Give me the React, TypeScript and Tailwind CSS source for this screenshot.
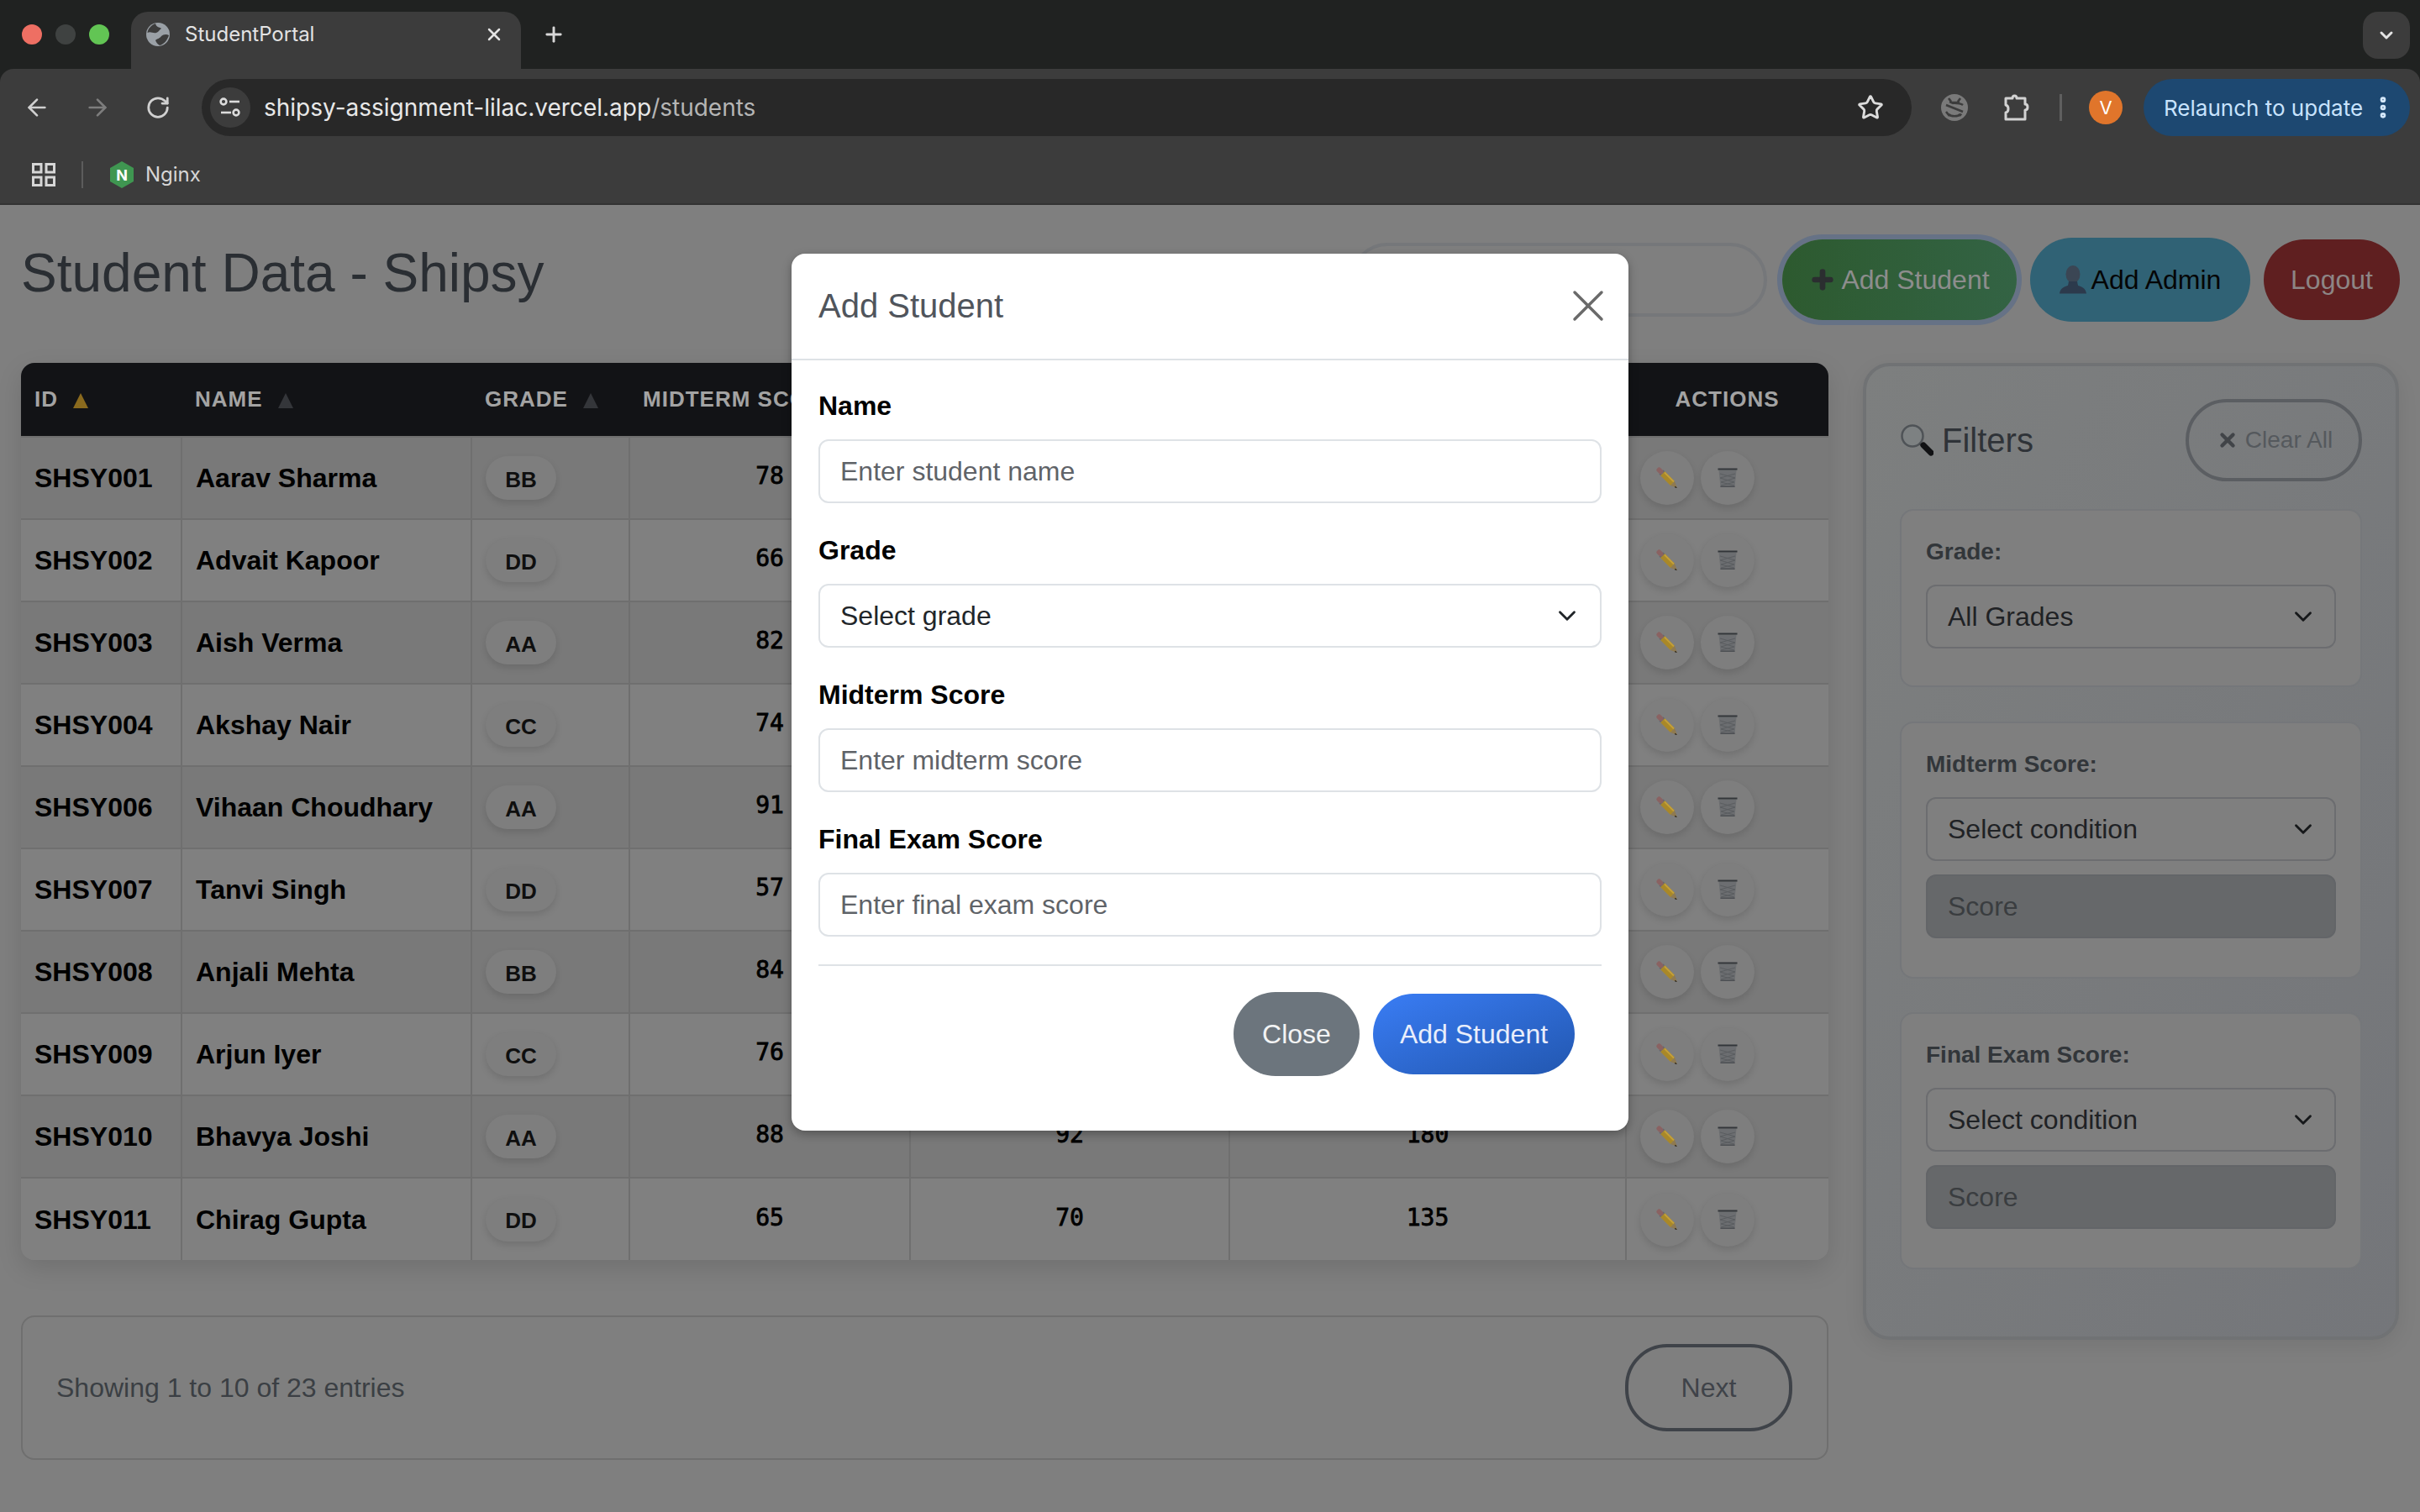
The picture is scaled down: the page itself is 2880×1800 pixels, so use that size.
import React from "react";
import { ArrowLeft, ArrowRight, ChevronDown, MoreVertical, Plus, RotateCw, Star, X } from "lucide-react";

const students = [
  ["SHSY001", "Aarav Sharma", "BB", "78", "85", "163"],
  ["SHSY002", "Advait Kapoor", "DD", "66", "71", "137"],
  ["SHSY003", "Aish Verma", "AA", "82", "90", "172"],
  ["SHSY004", "Akshay Nair", "CC", "74", "79", "153"],
  ["SHSY006", "Vihaan Choudhary", "AA", "91", "95", "186"],
  ["SHSY007", "Tanvi Singh", "DD", "57", "62", "119"],
  ["SHSY008", "Anjali Mehta", "BB", "84", "80", "164"],
  ["SHSY009", "Arjun Iyer", "CC", "76", "72", "148"],
  ["SHSY010", "Bhavya Joshi", "AA", "88", "92", "180"],
  ["SHSY011", "Chirag Gupta", "DD", "65", "70", "135"],
];

const SortArrow = ({ color = "#34363a" }: { color?: string }) => (
  <svg width="18" height="18" viewBox="0 0 18 18" className="ml-[18px] inline-block align-[-2px]">
    <polygon points="9,0 18,18 0,18" fill={color} />
  </svg>
);

const Pencil = () => (
  <svg width="26" height="26" viewBox="0 0 26 26">
    <path d="M7.5 7.5 L19.5 19.5" stroke="#a98828" strokeWidth="7" />
    <path d="M10 6.5 L21 17.5" stroke="#c4a03a" strokeWidth="1.8" />
    <path d="M6 6 L7.5 7.5" stroke="#5d6670" strokeWidth="7" />
    <path d="M3.5 3.5 L5.5 5.5" stroke="#8a6262" strokeWidth="6" strokeLinecap="round" />
    <path d="M17 22 L22 17 L25 25 Z" fill="#8f7a50" />
    <path d="M22.8 22.8 L25 25 L22 24.2 Z" fill="#111" />
  </svg>
);

const Trash = () => (
  <svg width="24" height="24" viewBox="0 0 24 24">
    <path d="M1.5 2.5 H22.5 L20.5 23 H3.5 Z" fill="#6c6e71" />
    <path d="M3 7 L21 12 M3 12 L20 17 M21 7 L3 12 M21 12 L4 17 M4 17 L20 21 M20 17 L4 21" stroke="#5a5d60" strokeWidth="1" />
    <rect x="0.5" y="0.5" width="23" height="2" fill="#33363a" />
    <rect x="3.5" y="21.5" width="17" height="1.5" fill="#4c4f53" />
  </svg>
);

const Magnifier = () => (
  <svg width="40" height="40" viewBox="0 0 40 40">
    <circle cx="15" cy="15" r="12.5" fill="#7d8182" stroke="#4f5357" strokeWidth="2.5" />
    <path d="M24 24 L27 27" stroke="#45484c" strokeWidth="3" />
    <path d="M28 26 L37 35" stroke="#111214" strokeWidth="7" strokeLinecap="round" />
  </svg>
);

const Bust = () => (
  <svg width="32" height="34" viewBox="0 0 32 34">
    <ellipse cx="16" cy="10.5" rx="8.5" ry="10.5" fill="#3b4654" />
    <path d="M11 19 H21 L22 24 C27 25.5 31 27 32 33.5 H0 C1 27 5 25.5 10 24 Z" fill="#2c3a4c" />
  </svg>
);

const GlobeFavicon = () => (
  <svg width="28" height="28" viewBox="0 0 28 28">
    <circle cx="14" cy="14" r="14" fill="#9aa0a6" />
    <path d="M11 1 C6 3 2 7 1.5 12 C5 10 8 13 12 12 C15 11 16 8 18 7 C16 5 12 6 11 1 Z" fill="#3c3c3c" />
    <path d="M27 15 C24 13 20 14 18 16 C16 19 13 19 11 21 C12 24 14 26 16 27 C21 26 25 21 27 15 Z" fill="#3c3c3c" />
  </svg>
);

const TuneIcon = () => (
  <svg width="26" height="24" viewBox="0 0 26 24" fill="none" stroke="#dcdcdc" strokeWidth="2.6">
    <circle cx="5" cy="5" r="3.4" />
    <path d="M12 5 H24" />
    <path d="M2 18 H14" />
    <circle cx="20" cy="18" r="3.4" />
  </svg>
);

const BugIcon = () => (
  <svg width="32" height="32" viewBox="0 0 32 32">
    <circle cx="16" cy="16" r="16" fill="#7a7a7a" />
    <path d="M9 5 L12 9 M23 5 L20 9 M10 10 H22 M6 13 C10 10 22 10 26 13 M6 21 L10 26 M26 21 L22 26 M9 24 C12 27 20 27 23 24" stroke="#3c3c3c" strokeWidth="2.6" fill="none" />
    <path d="M4 11 L28 22" stroke="#7a7a7a" strokeWidth="6" />
    <path d="M6 13 L26 21" stroke="#3c3c3c" strokeWidth="2.6" />
  </svg>
);

const PuzzleIcon = () => (
  <svg width="32" height="34" viewBox="0 0 32 34" fill="none" stroke="#d2d2d2" strokeWidth="3" strokeLinejoin="round">
    <path d="M3 6 H11 C11 2 16 2 16 6 H26 V13 C30 13 30 20 26 20 V31 H3 V23 C7 22 7 15 3 14 Z" />
  </svg>
);

const AppsIcon = () => (
  <svg width="28" height="28" viewBox="0 0 28 28" fill="none" stroke="#d6d6d6" strokeWidth="3">
    <rect x="1.5" y="1.5" width="9.5" height="9.5" />
    <rect x="17" y="1.5" width="9.5" height="9.5" />
    <rect x="1.5" y="17" width="9.5" height="9.5" />
    <rect x="17" y="17" width="9.5" height="9.5" />
  </svg>
);

const NginxIcon = () => (
  <span className="relative flex h-[32px] w-[28px] items-center justify-center">
    <svg width="28" height="32" viewBox="0 0 28 32" className="absolute inset-0">
      <polygon points="14,0 28,8 28,24 14,32 0,24 0,8" fill="#3f9651" />
    </svg>
    <span className="relative text-[18px] font-bold text-white">N</span>
  </span>
);

const BrowserChrome = () => (
  <div className="bg-[#202221] font-['Inter',sans-serif]">
    <div className="flex h-[82px] items-end pl-[26px] pr-[12px]">
      <div className="flex h-[82px] items-center gap-[16px] pr-[26px]">
        <span className="h-[24px] w-[24px] rounded-full bg-[#ee6f63]" />
        <span className="h-[24px] w-[24px] rounded-full bg-[#3f4241]" />
        <span className="h-[24px] w-[24px] rounded-full bg-[#62c554]" />
      </div>
      <div className="flex h-[68px] w-[464px] items-center rounded-t-[20px] bg-[#3c3c3c] pb-[14px] pl-[18px] pr-[20px] text-[#e3e3e3]">
        <GlobeFavicon />
        <span className="ml-[18px] flex-1 text-[24px]">StudentPortal</span>
        <X size={24} strokeWidth={2.5} />
      </div>
      <div className="flex h-[82px] items-center pl-[25px] text-[#d8d8d8]">
        <Plus size={28} strokeWidth={2.5} className="-mt-[1px]" />
      </div>
      <div className="ml-auto flex h-[56px] w-[56px] items-center justify-center self-start mt-[14px] rounded-[18px] bg-[#3c3c3c] text-[#e3e3e3]">
        <ChevronDown size={24} strokeWidth={3} />
      </div>
    </div>
    <div className="flex h-[162px] flex-col rounded-t-[16px] border-b-2 border-[#333] bg-[#3c3c3c]">
      <div className="mt-[12px] flex h-[68px] items-center pl-[28px] pr-[12px]">
        <ArrowLeft size={32} strokeWidth={2} className="text-[#d0d0d0]" />
        <ArrowRight size={32} strokeWidth={2} className="ml-[40px] text-[#7d7d7d]" />
        <RotateCw size={30} strokeWidth={2.2} className="ml-[41px] text-[#d0d0d0]" />
        <div className="ml-[37px] flex h-[68px] w-[2035px] items-center rounded-full bg-[#282828] pl-[10px] pr-[33px]">
          <span className="flex h-[48px] w-[48px] items-center justify-center rounded-full bg-[#3c3c3c]">
            <TuneIcon />
          </span>
          <span className="ml-[16px] flex-1 text-[28px] text-[#e8e8e8]">
            shipsy-assignment-lilac.vercel.app<span className="text-[#b5b5b5]">/students</span>
          </span>
          <Star size={32} strokeWidth={2.2} className="text-[#dcdcdc]" />
        </div>
        <span className="ml-[35px]"><BugIcon /></span>
        <span className="ml-[42px]"><PuzzleIcon /></span>
        <span className="ml-[35px] h-[32px] w-[3px] bg-[#5f5f5f]" />
        <span className="ml-[32px] flex h-[40px] w-[40px] items-center justify-center rounded-full bg-[#e0752b] text-[22px] text-white">V</span>
        <div className="ml-[25px] flex h-[68px] w-[317px] items-center rounded-full bg-[#1d4871] pl-[24px] pr-[16px] text-[#c8e3fd]">
          <span className="flex-1 text-[26px]">Relaunch to update</span>
          <MoreVertical size={32} strokeWidth={3} className="text-[#d5e8fb]" />
        </div>
      </div>
      <div className="mt-[28px] flex items-center pl-[38px]">
        <AppsIcon />
        <span className="ml-[31px] h-[32px] w-[2px] bg-[#5c5c5c]" />
        <span className="ml-[32px]"><NginxIcon /></span>
        <span className="ml-[14px] text-[24px] text-[#d6d6d6]">Nginx</span>
      </div>
    </div>
  </div>
);

const FakeSelect = ({ label, text }: { label: string; text: string }) => (
  <div
    aria-label={label}
    className="flex h-[76px] items-center justify-between rounded-[12px] border-2 border-[#6c6d70] pl-[24px] pr-[20px] text-[32px] text-[#1f2225]"
  >
    {text}
    <ChevronDown size={34} strokeWidth={2} className="text-[#16181a]" />
  </div>
);

const FilterCard = ({ label, text, score, className }: { label: string; text: string; score?: boolean; className?: string }) => (
  <div className={`rounded-[16px] border-2 border-[#75777a] bg-[#7f7f7f] px-[29px] pt-[28px] ${score ? "pb-[46px]" : "pb-[44px]"} ${className ?? ""}`}>
    <div className="mb-[18px] h-[42px] text-[28px] font-bold leading-[42px] text-[#32363a]">{label}</div>
    <FakeSelect label={label} text={text} />
    {score && (
      <div className="mt-[16px] flex h-[76px] items-center rounded-[12px] border-2 border-[#636568] bg-[#66686a] pl-[24px] text-[32px] text-[#3a3d40]">
        Score
      </div>
    )}
  </div>
);

const FiltersPanel = () => (
  <aside className="ml-[41px] h-[1163px] w-[638px] rounded-[32px] border-4 border-[#707274] bg-gradient-to-br from-[#7d7f7f] to-[#74767a] pl-[40px] pr-[40px] pt-[39px] shadow-[0_8px_24px_rgba(0,0,0,0.08)]">
    <div className="mb-[33px] flex h-[98px] items-center justify-between">
      <div className="flex items-center gap-[10px] text-[40px] text-[#2f3338]">
        <Magnifier />
        Filters
      </div>
      <div className="flex h-[98px] w-[210px] items-center justify-center gap-[8px] rounded-full border-4 border-[#5b5e62] pl-[2px] text-[28px] text-[#55595d]">
        <X size={26} strokeWidth={4} className="text-[#414448]" />
        Clear All
      </div>
    </div>
    <FilterCard label="Grade:" text="All Grades" />
    <FilterCard label="Midterm Score:" text="Select condition" score className="mt-[41px]" />
    <FilterCard label="Final Exam Score:" text="Select condition" score className="mt-[40px]" />
  </aside>
);

const StudentTable = () => (
  <div className="overflow-hidden rounded-[16px] shadow-[0_10px_30px_rgba(0,0,0,0.12)]">
    <table className="w-[2151px] table-fixed border-collapse">
      <colgroup>
        <col className="w-[191px]" />
        <col className="w-[345px]" />
        <col className="w-[188px]" />
        <col className="w-[334px]" />
        <col className="w-[380px]" />
        <col className="w-[472px]" />
        <col className="w-[241px]" />
      </colgroup>
      <thead>
        <tr className="h-[88px] bg-[#121316] text-left text-[26px] font-bold tracking-[1px] text-[#a3a3a3]">
          <th className="pl-[16px]">ID<SortArrow color="#8a6a1e" /></th>
          <th className="pl-[16px]">NAME<SortArrow /></th>
          <th className="pl-[16px]">GRADE<SortArrow /></th>
          <th className="pl-[16px] whitespace-nowrap">MIDTERM SCORE<SortArrow /></th>
          <th className="pl-[16px] whitespace-nowrap">FINAL SCORE<SortArrow /></th>
          <th className="pl-[16px] whitespace-nowrap">TOTAL<SortArrow /></th>
          <th className="text-center">ACTIONS</th>
        </tr>
      </thead>
      <tbody>
        {students.map((s, i) => (
          <tr key={s[0]} className={`h-[98px] border-t-2 border-[#6f6f6f] ${i % 2 === 0 ? "bg-[#797979]" : "bg-[#808080]"} ${i === 0 ? "border-t-0" : ""} text-black`}>
            <td className="border-r-2 border-[#6f6f6f] pl-[16px] text-[32px] font-bold">{s[0]}</td>
            <td className="border-r-2 border-[#6f6f6f] pl-[16px] text-[32px] font-bold">{s[1]}</td>
            <td className="border-r-2 border-[#6f6f6f] pl-[16px]">
              <span className="flex h-[52px] w-[84px] items-center justify-center rounded-[26px] bg-[#7e7e7e] pt-[4px] text-[26px] font-bold text-[#0f0f0f] shadow-[0_4px_8px_rgba(0,0,0,0.12)]">
                {s[2]}
              </span>
            </td>
            <td className="border-r-2 border-[#6f6f6f] pb-[4px] text-center font-['DejaVu_Sans_Mono',monospace] text-[28px] [-webkit-text-stroke:0.8px_black]">{s[3]}</td>
            <td className="border-r-2 border-[#6f6f6f] pb-[4px] text-center font-['DejaVu_Sans_Mono',monospace] text-[28px] [-webkit-text-stroke:0.8px_black]">{s[4]}</td>
            <td className="border-r-2 border-[#6f6f6f] pb-[4px] text-center font-['DejaVu_Sans_Mono',monospace] text-[28px] [-webkit-text-stroke:0.8px_black]">{s[5]}</td>
            <td className="pl-[16px]">
              <div className="flex gap-[8px]">
                <span className="flex h-[64px] w-[64px] items-center justify-center rounded-full bg-[#7e7e7e] shadow-[0_4px_8px_rgba(0,0,0,0.12)]">
                  <Pencil />
                </span>
                <span className="flex h-[64px] w-[64px] items-center justify-center rounded-full bg-[#7e7e7e] shadow-[0_4px_8px_rgba(0,0,0,0.12)]">
                  <Trash />
                </span>
              </div>
            </td>
          </tr>
        ))}
      </tbody>
    </table>
  </div>
);

const ModalField = ({ label, placeholder, className }: { label: string; placeholder: string; className?: string }) => (
  <div className={className}>
    <label className="mb-[16px] block text-[32px] font-bold leading-[48px] text-black">{label}</label>
    <input
      placeholder={placeholder}
      readOnly
      className="h-[76px] w-full rounded-[12px] border-2 border-[#dee2e6] bg-white pl-[24px] text-[32px] text-[#212529] placeholder:text-[#5f6368] outline-none"
    />
  </div>
);

const AddStudentModal = () => (
  <div className="absolute inset-0 flex items-start justify-center pt-[58px]">
    <div className="h-[1044px] w-[996px] rounded-[16px] bg-white shadow-[0_4px_12px_rgba(0,0,0,0.3)]">
      <div className="flex h-[127px] items-center justify-between border-b-2 border-[#dee2e6] pb-[2px] pl-[32px] pr-[16px]">
        <span className="text-[40px] text-[#50555c]">Add Student</span>
        <X size={64} strokeWidth={1.3} className="text-[#6a6a6a]" />
      </div>
      <div className="px-[32px] pt-[30px]">
        <ModalField label="Name" placeholder="Enter student name" />
        <div className="mt-[32px]">
          <label className="mb-[16px] block text-[32px] font-bold leading-[48px] text-black">Grade</label>
          <div className="flex h-[76px] items-center justify-between rounded-[12px] border-2 border-[#dee2e6] pl-[24px] pr-[22px] text-[32px] text-[#212529]">
            Select grade
            <ChevronDown size={34} strokeWidth={2} className="text-[#212529]" />
          </div>
        </div>
        <ModalField label="Midterm Score" placeholder="Enter midterm score" className="mt-[32px]" />
        <ModalField label="Final Exam Score" placeholder="Enter final exam score" className="mt-[32px]" />
        <div className="mt-[33px] flex h-[133px] items-start justify-end gap-[16px] border-t-2 border-[#dee2e6] pr-[32px] pt-[31px]">
          <button className="h-[100px] w-[150px] rounded-[50px] bg-[#6c757d] text-[32px] text-[#f2f3f4]">Close</button>
          <button className="mt-[2px] h-[96px] w-[240px] rounded-[48px] bg-gradient-to-br from-[#3a7df5] to-[#2257b0] text-[32px] text-[#e9eefb]">
            Add Student
          </button>
        </div>
      </div>
    </div>
  </div>
);

export default function App() {
  return (
    <div className="h-screen w-full overflow-hidden bg-[#7f7f7f] font-['Liberation_Sans',Arial,sans-serif]">
      <BrowserChrome />
      <div className="relative h-[1556px] pl-[25px] pr-[24px] pt-[39px]">
        <div className="flex h-[100px] items-center">
          <h1 className="mb-[16px] flex-1 text-[64px] font-normal text-[#2a2e33]">Student Data - Shipsy</h1>
          <div className="mr-[18px] h-[88px] w-[496px] rounded-full border-4 border-[#75777a] bg-[#7f7f7f]" />
          <button className="flex h-[96px] w-[279px] items-center justify-center gap-[6px] rounded-[48px] bg-gradient-to-r from-[#2d5a2f] to-[#336344] text-[32px] text-[#8d8d8d] shadow-[0_0_0_6px_#667286]">
            <Plus size={32} strokeWidth={5} className="text-[#2b2e30]" />
            Add Student
          </button>
          <button className="ml-[16px] flex h-[100px] w-[262px] items-center justify-center gap-[6px] rounded-[50px] bg-[#306275] text-[32px] text-[#050505]">
            <Bust />
            Add Admin
          </button>
          <button className="ml-[16px] h-[96px] w-[162px] rounded-[48px] bg-[#5f1f20] text-[32px] text-[#8d8585]">Logout</button>
        </div>
        <div className="mt-[49px] flex items-start">
          <div className="w-[2151px]">
            <StudentTable />
            <div className="mt-[66px] flex h-[172px] items-center justify-between rounded-[16px] border-2 border-[#6f6f6f] pl-[40px] pr-[41px]">
              <span className="text-[32px] text-[#3b3f44]">Showing 1 to 10 of 23 entries</span>
              <button className="h-[104px] w-[199px] rounded-[50px] border-4 border-[#3f4349] text-[32px] text-[#3f4349]">Next</button>
            </div>
          </div>
          <FiltersPanel />
        </div>
        <AddStudentModal />
      </div>
    </div>
  );
}
